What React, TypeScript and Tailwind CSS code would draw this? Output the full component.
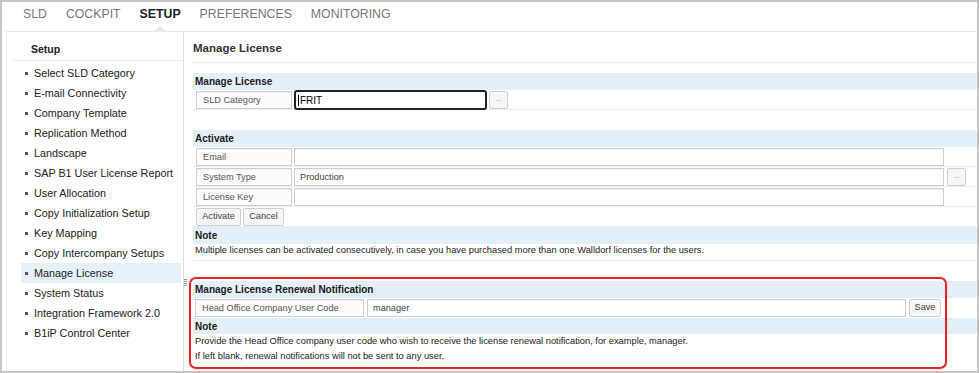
import React from 'react'

const navItems = ['SLD', 'COCKPIT', 'SETUP', 'PREFERENCES', 'MONITORING']

const setupItems = [
    'Select SLD Category',
    'E-mail Connectivity',
    'Company Template',
    'Replication Method',
    'Landscape',
    'SAP B1 User License Report',
    'User Allocation',
    'Copy Initialization Setup',
    'Key Mapping',
    'Copy Intercompany Setups',
    'Manage License',
    'System Status',
    'Integration Framework 2.0',
    'B1iP Control Center',
]

const Band = ({ children, className = 'h-[16px] leading-[17px]' }: { children: React.ReactNode; className?: string }) => (
    <div className={`${className} bg-[#e4eff8] pl-[2px] text-[10px] font-bold text-[#1a1a1a]`}>
        {children}
    </div>
)

const Row = ({ children, className = 'h-[20px]' }: { children?: React.ReactNode; className?: string }) => (
    <div className={`${className} flex gap-[2px] border-t border-[#e4eff8] pl-[3px] pt-[1px]`}>{children}</div>
)

const Label = ({ children, className }: { children: React.ReactNode; className: string }) => (
    <div className={`${className} h-[18px] shrink-0 border border-[#cfcfcf] bg-[#fcfcfc] pl-[6px] text-[9.2px] leading-[16px] text-[#555] shadow-[inset_0_1px_1px_rgba(0,0,0,0.05)]`}>
        {children}
    </div>
)

const Field = ({ value = '', className }: { value?: string; className: string }) => (
    <div className={`${className} h-[18px] shrink-0 border border-[#cfcfcf] bg-white pl-[5px] text-[9.2px] leading-[16px] text-[#444] shadow-[inset_0_1px_1px_rgba(0,0,0,0.06)]`}>
        {value}
    </div>
)

const Btn = ({ children, className }: { children: React.ReactNode; className: string }) => (
    <div className={`${className} flex h-[18px] shrink-0 items-center justify-center rounded-[2px] border border-[#cfcfcf] bg-[#f6f6f6] text-[9.2px] text-[#444]`}>
        {children}
    </div>
)

const Dots = ({ className }: { className: string }) => (
    <div className={`${className} flex h-[18px] w-[19px] shrink-0 items-center justify-center rounded-[2px] border border-[#cfcfcf] bg-[#f6f6f6] pb-[2px] text-[8px] text-[#999]`}>
        ...
    </div>
)

const App: React.FC = () => {
    return (
        <div className="h-[373px] w-[979px] overflow-hidden border-2 border-[#c6c6c6] bg-white font-['Liberation_Sans',Arial,sans-serif]">
            {/* top tabs */}
            <div className="relative flex h-[29px] items-center gap-[19px] pb-[4px] pl-[21px] text-[12.3px] text-[#777]">
                {navItems.map((n) => (
                    <span key={n} className={n === 'SETUP' ? 'font-bold text-[#222]' : ''}>
                        {n}
                    </span>
                ))}
                <div className="absolute bottom-0 left-[152px] h-0 w-0 border-x-[6px] border-b-[5px] border-x-transparent border-b-[#e8e8e8]" />
            </div>

            <div className="ml-[4px] flex h-[340px] border-l border-t border-[#e8e8e8]">
                {/* sidebar */}
                <div className="w-[177px] shrink-0 border-r border-[#dcdcdc]">
                    <div className="ml-[6px] flex h-[29px] items-end border-b border-[#ececec] pb-[2px] pl-[18px] text-[10.5px] font-bold text-[#222]">
                        Setup
                    </div>
                    <ul className="pt-[2px]">
                        {setupItems.map((s) => (
                            <li
                                key={s}
                                className={`ml-[14px] flex h-[20px] w-[160px] items-center gap-[6px] pl-[4px] text-[10.8px] text-[#222] ${
                                    s === 'Manage License' ? 'bg-[#e5f0f9]' : ''
                                }`}
                            >
                                <span className="h-[3px] w-[3px] shrink-0 bg-[#555]" />
                                {s}
                            </li>
                        ))}
                    </ul>
                </div>

                {/* splitter */}
                <div className="w-[5px] shrink-0 pt-[247px]">
                    <div className="flex flex-col items-start gap-[1px]">
                        <span className="h-[1px] w-[3px] bg-[#9a9a9a]" />
                        <span className="h-[1px] w-[3px] bg-[#9a9a9a]" />
                        <span className="h-[1px] w-[3px] bg-[#9a9a9a]" />
                        <span className="h-[1px] w-[3px] bg-[#9a9a9a]" />
                    </div>
                </div>

                {/* main */}
                <div className="relative min-w-0 flex-1">
                    <div className="ml-[4px] flex h-[31px] items-center border-b border-[#ececec] pt-[3px] text-[11.5px] font-bold text-[#333]">
                        Manage License
                    </div>

                    <div className="ml-[4px] mt-[10px]">
                        <Band>Manage License</Band>
                        <Row>
                            <Label className="w-[96px]">SLD Category</Label>
                            <div className="-mt-[1px] flex h-[20px] w-[193px] shrink-0 items-center rounded-[3px] border-2 border-[#222] pl-[2px] text-[10px] text-black">
                                <span className="mr-[1px] h-[11px] w-[1px] bg-black" />
                                FRIT
                            </div>
                            <Dots className="" />
                        </Row>
                        <Row className="h-[21px]" />

                        <Band>Activate</Band>
                        <Row>
                            <Label className="w-[96px]">Email</Label>
                            <Field className="w-[650px]" />
                        </Row>
                        <Row>
                            <Label className="w-[96px]">System Type</Label>
                            <Field className="w-[650px]" value="Production" />
                            <Dots className="ml-[1px]" />
                        </Row>
                        <Row>
                            <Label className="w-[96px]">License Key</Label>
                            <Field className="w-[650px]" />
                        </Row>
                        <Row>
                            <Btn className="w-[45px]">Activate</Btn>
                            <Btn className="w-[41px]">Cancel</Btn>
                        </Row>

                        <Band className="h-[18px] leading-[19px]">Note</Band>
                        <div className="h-[16px] pl-[2px] text-[9.3px] leading-[12px] text-[#222]">
                            Multiple licenses can be activated consecutively, in case you have purchased more than one Walldorf licenses for the users.
                        </div>
                        <Row className="h-[21px]" />

                        <Band>Manage License Renewal Notification</Band>
                        <div className="flex h-[21px] gap-[3px] border-t border-[#e4eff8] pl-[2px] pt-[1px]">
                            <Label className="w-[169px]">Head Office Company User Code</Label>
                            <Field className="w-[539px]" value="manager" />
                            <Btn className="w-[32px]">Save</Btn>
                        </div>
                        <Band>Note</Band>
                        <div className="pl-[2px] text-[9.3px] leading-[15px] text-[#222]">
                            <div>Provide the Head Office company user code who wish to receive the license renewal notification, for example, manager.</div>
                            <div>If left blank, renewal notifications will not be sent to any user.</div>
                        </div>
                    </div>

                    {/* annotation */}
                    <div className="absolute left-0 top-[245px] h-[92px] w-[758px] rounded-[7px] border-2 border-[#e3262b] shadow-[0_0_2px_rgba(227,38,43,0.35)]" />
                </div>
            </div>
        </div>
    )
}

export default App
